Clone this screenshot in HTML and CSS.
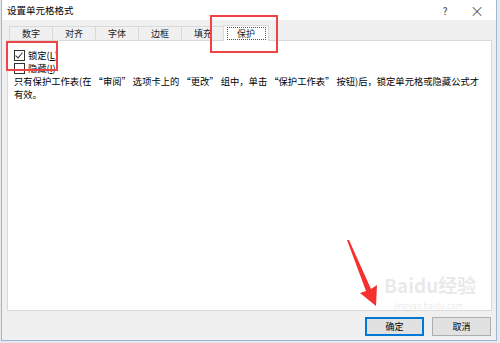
FILE: index.html
```html
<!DOCTYPE html>
<html lang="zh-CN">
<head>
  <meta charset="UTF-8" />
  <title>设置单元格格式</title>
  <link rel="stylesheet" href="styles.css">
</head>
<body>
  <div class="screen">
    <div class="dialog">
      <div class="titlebar">
        <span class="title">设置单元格格式</span>
        <span class="help">?</span>
        <span class="close">×</span>
      </div>
      <div class="body">
        <div class="tabs">
          <div class="tab">数字</div>
          <div class="tab">对齐</div>
          <div class="tab">字体</div>
          <div class="tab">边框</div>
          <div class="tab">填充</div>
          <div class="tab active"><span class="focus">保护</span></div>
        </div>
        <div class="panel">
          <label class="check"><span class="box checked"></span>锁定(<u>L</u>)</label>
          <label class="check"><span class="box"></span>隐藏(<u>I</u>)</label>
          <p class="note">只有保护工作表(在 “审阅” 选项卡上的 “更改” 组中，单击 “保护工作表” 按钮)后，锁定单元格或隐藏公式才有效。</p>
        </div>
        <div class="footer">
          <button class="btn primary">确定</button>
          <button class="btn">取消</button>
        </div>
      </div>
    </div>

    <div class="mark mark-tab"></div>
    <div class="mark mark-check"></div>
    <svg class="arrow" width="40" height="75" viewBox="0 0 40 75">
      <polygon points="1,1 3,1 25,50 31,46 30,67 14,54 20,52" fill="#f5302f"/>
    </svg>
    <div class="watermark">
      <div class="wm-logo">Baidu经验</div>
      <div class="wm-url">jingyan.baidu.com</div>
    </div>
  </div>
</body>
</html>
```

FILE: styles.css
```css
html, body {
  margin: 0;
  height: 100%;
  background: #dfe3e8;
  font-family: "Noto Sans CJK SC", "Liberation Sans", sans-serif;
  color: #000;
}

.screen {
  position: relative;
  width: 500px;
  height: 343px;
  overflow: hidden;
  background: #e6e9ee;
}

.dialog {
  width: 494px;
  height: 340px;
  margin-left: 1px;
  border: 1px solid #9fb6d2;
  border-top: none;
  background: #f0f0f0;
  display: flex;
  flex-direction: column;
}

.titlebar {
  height: 20px;
  background: #fff;
  display: flex;
  align-items: center;
  padding: 0 12px 0 5px;
  font-size: 9.5px;
}
.title { flex: 1; }
.help { width: 30px; text-align: center; font-size: 10px; color: #333; margin-right: 10px; }
.close { width: 14px; text-align: center; font-size: 14px; color: #333; font-weight: 300; }

.body {
  flex: 1;
  display: flex;
  flex-direction: column;
  padding: 5px 4px 0 5px;
}

.tabs {
  display: flex;
  height: 15px;
  padding-left: 2px;
  align-items: flex-end;
}
.tab {
  width: 42px;
  height: 13px;
  border: 1px solid #d9d9d9;
  border-bottom: none;
  border-right: none;
  font-size: 9px;
  line-height: 13px;
  text-align: center;
  color: #222;
}
.tab.active {
  width: 46px;
  height: 16px;
  margin-left: -1px;
  margin-bottom: -1px;
  background: #fff;
  border-right: 1px solid #d9d9d9;
  position: relative;
  z-index: 1;
  display: flex;
  justify-content: center;
  align-items: flex-start;
  padding-top: 1px;
  box-sizing: border-box;
}
.focus {
  display: block;
  width: 37px;
  border: 1px dotted #555;
  line-height: 11px;
}

.panel {
  height: 261px;
  background: #fff;
  border: 1px solid #d9d9d9;
  padding: 8px 6px 0 6px;
  font-size: 9.3px;
  display: flex;
  flex-direction: column;
}

.check {
  display: flex;
  align-items: center;
  height: 12px;
  line-height: 12px;
}
.check + .check { margin-top: 1px; }
.box {
  width: 9px;
  height: 9px;
  border: 1px solid #333;
  background: #fff;
  margin-right: 3px;
  position: relative;
}
.box.checked::after {
  content: "";
  position: absolute;
  left: 2px;
  top: 0;
  width: 3px;
  height: 6px;
  border: solid #333;
  border-width: 0 1px 1px 0;
  transform: rotate(40deg);
}

.note {
  margin: 1px 0 0 0;
  width: 468px;
  line-height: 13px;
}

.footer {
  display: flex;
  justify-content: flex-end;
  gap: 8px;
  padding: 6px 1px 0 0;
}
.btn {
  width: 59px;
  height: 19px;
  padding: 0;
  font-family: inherit;
  font-size: 9px;
  background: #e1e1e1;
  border: 1px solid #adadad;
  color: #000;
}
.btn.primary {
  border: 1px solid #0078d7;
  box-shadow: inset 0 0 0 1px #0078d7;
}

.mark {
  position: absolute;
  border: 2px solid #f04444;
}
.mark-tab { left: 210px; top: 15px; width: 64px; height: 34px; }
.mark-check { left: 6px; top: 41px; width: 48px; height: 26px; }

.arrow {
  position: absolute;
  left: 346px;
  top: 239px;
}

.watermark {
  position: absolute;
  left: 384px;
  top: 275px;
  display: flex;
  flex-direction: column;
  gap: 6px;
  color: rgba(180, 180, 180, 0.3);
}
.wm-logo {
  font-size: 19px;
  font-weight: bold;
  line-height: 20px;
}
.wm-url {
  font-size: 8px;
  line-height: 9px;
  margin-left: 10px;
}
```
